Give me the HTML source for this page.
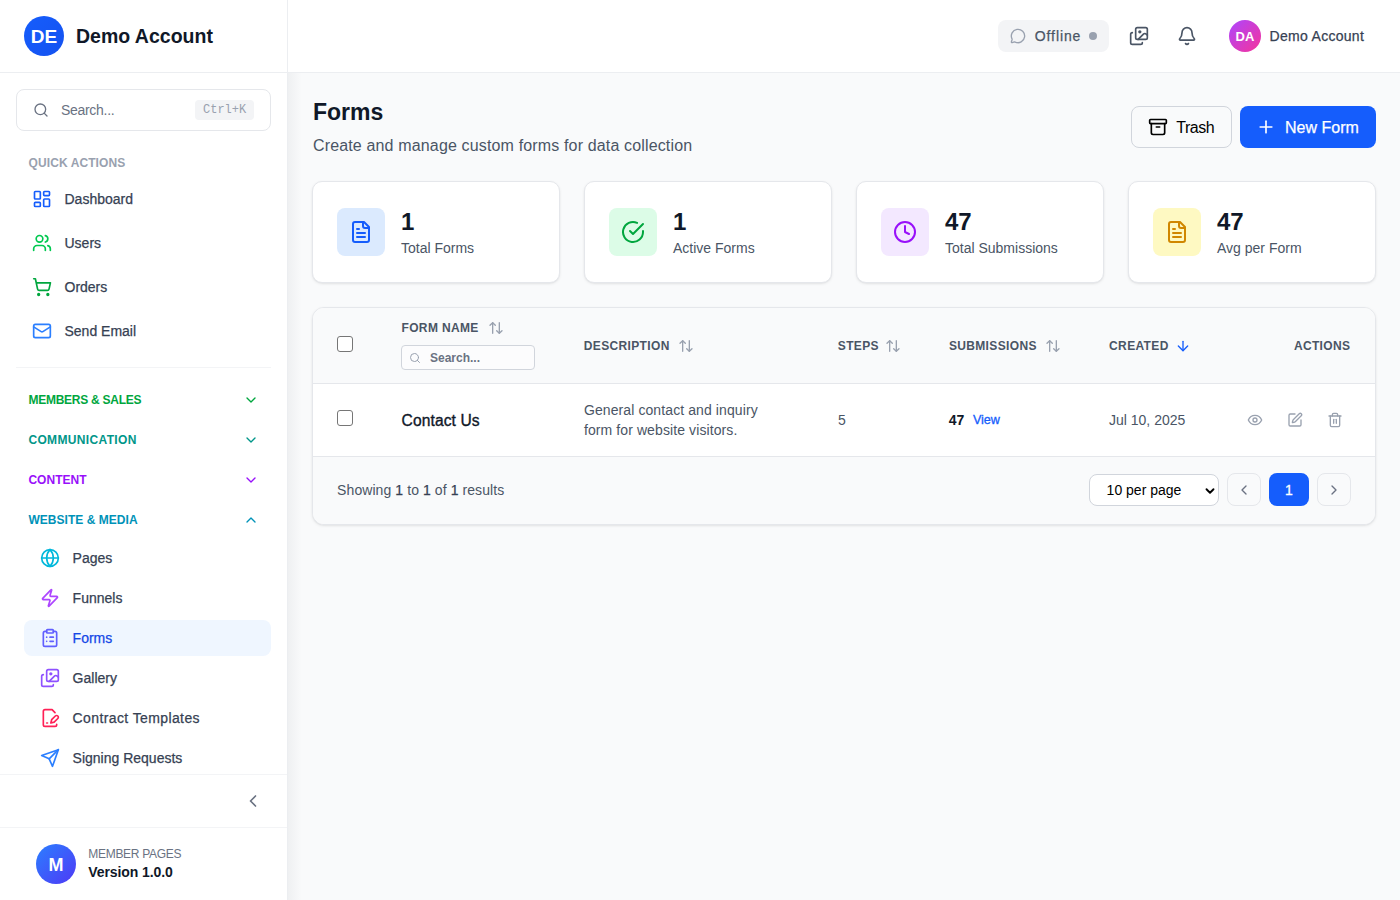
<!DOCTYPE html>
<html><head><meta charset="utf-8">
<style>
*{box-sizing:border-box;margin:0;padding:0}
html,body{width:1400px;height:900px;overflow:hidden;background:#f9fafb;font-family:"Liberation Sans",sans-serif;color:#101828;position:relative}
svg{position:absolute;display:block;fill:none;stroke:currentColor;stroke-width:2;stroke-linecap:round;stroke-linejoin:round}
.a{position:absolute}
.t{position:absolute;white-space:nowrap;line-height:1}
#sidebar{position:absolute;left:0;top:0;width:288px;height:900px;background:#fff;border-right:1px solid #eceef1}
#shadow{position:absolute;left:288px;top:73px;width:14px;height:827px;background:linear-gradient(to right,rgba(17,24,39,0.045),rgba(17,24,39,0))}
#header{position:absolute;left:288px;top:0;width:1112px;height:73px;background:#fff;border-bottom:1px solid #eceef1}
.nav{font-size:14px;color:#364153;-webkit-text-stroke:0.25px currentColor}
.med{-webkit-text-stroke:0.25px currentColor}
.sec{font-size:12px;font-weight:700;letter-spacing:0.1px}
.card{position:absolute;top:181px;width:248px;height:102px;background:#fff;border:1px solid #e5e7eb;border-radius:10px;box-shadow:0 1px 3px 0 rgba(0,0,0,0.08),0 1px 2px -1px rgba(0,0,0,0.08)}
.ib{position:absolute;left:24px;top:26px;width:48px;height:48px;border-radius:8px}
.num{position:absolute;left:88px;top:28px;font-size:24px;font-weight:700;line-height:1;color:#101828}
.lab{position:absolute;left:88px;top:59px;font-size:14px;line-height:1;color:#4a5565;white-space:nowrap}
.th{font-size:12px;font-weight:700;color:#4a5565;letter-spacing:0.35px}
.cb{position:absolute;width:16px;height:16px;border:1px solid #767676;border-radius:3px;background:#fff}
</style></head><body>
<div id="sidebar">
  <div class="a" style="left:0;top:0;width:287px;height:73px;border-bottom:1px solid #eceef1"></div>
  <div class="a" style="left:24px;top:16px;width:40px;height:40px;border-radius:50%;background:linear-gradient(135deg,#155dfc,#1552f0)"></div>
  <div class="t" style="left:24px;top:26.8px;width:40px;text-align:center;font-size:19px;font-weight:700;color:#fff">DE</div>
  <div class="t" style="left:76px;top:26.5px;font-size:19.5px;font-weight:700;color:#101828">Demo Account</div>

  <!-- search -->
  <div class="a" style="left:16px;top:89px;width:255px;height:42px;border:1px solid #e5e7eb;border-radius:8px"></div>
  <svg style="left:33px;top:102px;color:#6a7282" width="16" height="16" viewBox="0 0 24 24"><circle cx="11" cy="11" r="8"/><path d="m21 21-4.3-4.3"/></svg>
  <div class="t" style="left:61px;top:103px;font-size:14px;color:#6a7282;letter-spacing:-0.3px">Search...</div>
  <div class="a" style="left:195px;top:100px;width:59px;height:20px;border-radius:4px;background:#f3f4f6"></div>
  <div class="t" style="left:203px;top:104px;font-family:'Liberation Mono',monospace;font-size:12px;color:#99a1af">Ctrl+K</div>

  <div class="t sec" style="left:28.5px;top:156.7px;color:#99a1af">QUICK ACTIONS</div>

  <svg style="left:32px;top:189px;color:#155dfc" width="20" height="20" viewBox="0 0 24 24"><rect width="7" height="9" x="3" y="3" rx="1"/><rect width="7" height="5" x="14" y="3" rx="1"/><rect width="7" height="9" x="14" y="12" rx="1"/><rect width="7" height="5" x="3" y="16" rx="1"/></svg>
  <div class="t nav" style="left:64.5px;top:191.7px">Dashboard</div>
  <svg style="left:32px;top:233px;color:#00c950" width="20" height="20" viewBox="0 0 24 24"><path d="M16 21v-2a4 4 0 0 0-4-4H6a4 4 0 0 0-4 4v2"/><circle cx="9" cy="7" r="4"/><path d="M22 21v-2a4 4 0 0 0-3-3.87"/><path d="M16 3.13a4 4 0 0 1 0 7.75"/></svg>
  <div class="t nav" style="left:64.5px;top:236px">Users</div>
  <svg style="left:32px;top:277px;color:#00a63e" width="20" height="20" viewBox="0 0 24 24"><circle cx="8" cy="21" r="1"/><circle cx="19" cy="21" r="1"/><path d="M2.05 2.05h2l2.66 12.42a2 2 0 0 0 2 1.58h9.78a2 2 0 0 0 1.95-1.57l1.65-7.43H5.12"/></svg>
  <div class="t nav" style="left:64.5px;top:279.8px">Orders</div>
  <svg style="left:32px;top:321px;color:#2b7fff" width="20" height="20" viewBox="0 0 24 24"><rect width="20" height="16" x="2" y="4" rx="2"/><path d="m22 7-8.97 5.7a1.94 1.94 0 0 1-2.06 0L2 7"/></svg>
  <div class="t nav" style="left:64.5px;top:323.8px">Send Email</div>

  <div class="a" style="left:16px;top:367px;width:255px;height:1px;background:#f3f4f6"></div>

  <div class="t sec" style="left:28.4px;top:393.8px;color:#00a63e;letter-spacing:-0.25px">MEMBERS &amp; SALES</div>
  <svg style="left:243px;top:391.5px;color:#00a63e" width="16" height="16" viewBox="0 0 24 24"><path d="m6 9 6 6 6-6"/></svg>
  <div class="t sec" style="left:28.4px;top:433.8px;color:#009689;letter-spacing:0.35px">COMMUNICATION</div>
  <svg style="left:243px;top:431.5px;color:#009689" width="16" height="16" viewBox="0 0 24 24"><path d="m6 9 6 6 6-6"/></svg>
  <div class="t sec" style="left:28.4px;top:473.8px;color:#9810fa;letter-spacing:0.03px">CONTENT</div>
  <svg style="left:243px;top:471.5px;color:#9810fa" width="16" height="16" viewBox="0 0 24 24"><path d="m6 9 6 6 6-6"/></svg>
  <div class="t sec" style="left:28.4px;top:513.8px;color:#0092b8;letter-spacing:0.04px">WEBSITE &amp; MEDIA</div>
  <svg style="left:243px;top:511.5px;color:#0092b8" width="16" height="16" viewBox="0 0 24 24"><path d="m18 15-6-6-6 6"/></svg>

  <svg style="left:40px;top:548px;color:#00b8db" width="20" height="20" viewBox="0 0 24 24"><circle cx="12" cy="12" r="10"/><path d="M12 2a14.5 14.5 0 0 0 0 20 14.5 14.5 0 0 0 0-20"/><path d="M2 12h20"/></svg>
  <div class="t nav" style="left:72.6px;top:551px">Pages</div>
  <svg style="left:40px;top:588px;color:#ad46ff" width="20" height="20" viewBox="0 0 24 24"><path d="M4 14a1 1 0 0 1-.78-1.63l9.9-10.2a.5.5 0 0 1 .86.46l-1.92 6.02A1 1 0 0 0 13 10h7a1 1 0 0 1 .78 1.63l-9.9 10.2a.5.5 0 0 1-.86-.46l1.92-6.02A1 1 0 0 0 11 14z"/></svg>
  <div class="t nav" style="left:72.6px;top:591px">Funnels</div>
  <div class="a" style="left:24px;top:620px;width:247px;height:36px;border-radius:8px;background:#eff6ff"></div>
  <svg style="left:40px;top:628px;color:#615fff" width="20" height="20" viewBox="0 0 24 24"><rect width="8" height="4" x="8" y="2" rx="1" ry="1"/><path d="M16 4h2a2 2 0 0 1 2 2v14a2 2 0 0 1-2 2H6a2 2 0 0 1-2-2V6a2 2 0 0 1 2-2h2"/><path d="M12 11h4"/><path d="M12 16h4"/><path d="M8 11h.01"/><path d="M8 16h.01"/></svg>
  <div class="t nav" style="left:72.6px;top:631px;color:#1447e6">Forms</div>
  <svg style="left:40px;top:668px;color:#8e51ff" width="20" height="20" viewBox="0 0 24 24"><path d="m22 11-1.296-1.296a2.4 2.4 0 0 0-3.408 0L11 16"/><path d="M4 8a2 2 0 0 0-2 2v10a2 2 0 0 0 2 2h10a2 2 0 0 0 2-2"/><circle cx="13" cy="7" r="1" fill="currentColor"/><rect x="8" y="2" width="14" height="14" rx="2"/></svg>
  <div class="t nav" style="left:72.6px;top:671px">Gallery</div>
  <svg style="left:40px;top:708px;color:#ff2056" width="20" height="20" viewBox="0 0 24 24"><path d="M20 19.5v.5a2 2 0 0 1-2 2H6a2 2 0 0 1-2-2V4a2 2 0 0 1 2-2h8.5L18 5.5"/><path d="M8 18h1"/><path d="M18.42 9.61a2.1 2.1 0 1 1 2.97 2.97L16.95 17 13 18l.99-3.95 4.43-4.44Z"/></svg>
  <div class="t nav" style="left:72.6px;top:711px;letter-spacing:0.39px">Contract Templates</div>
  <svg style="left:40px;top:748px;color:#2b7fff" width="20" height="20" viewBox="0 0 24 24"><path d="m22 2-7 20-4-9-9-4Z"/><path d="M22 2 11 13"/></svg>
  <div class="t nav" style="left:72.6px;top:751px">Signing Requests</div>

  <div class="a" style="left:0;top:774px;width:287px;height:1px;background:#f3f4f6"></div>
  <svg style="left:243px;top:791px;color:#6a7282" width="20" height="20" viewBox="0 0 24 24"><path d="m15 18-6-6 6-6"/></svg>
  <div class="a" style="left:0;top:827px;width:287px;height:1px;background:#f3f4f6"></div>
  <div class="a" style="left:36px;top:844px;width:40px;height:40px;border-radius:50%;background:linear-gradient(135deg,#2b7fff,#4f39f6)"></div>
  <div class="t" style="left:36px;top:856px;width:40px;text-align:center;font-size:18px;font-weight:700;color:#fff">M</div>
  <div class="t" style="left:88.3px;top:847.6px;font-size:12px;color:#6a7282;letter-spacing:-0.3px">MEMBER PAGES</div>
  <div class="t" style="left:88.3px;top:865px;font-size:14px;font-weight:700;color:#101828;letter-spacing:-0.1px">Version 1.0.0</div>
</div>
<div id="shadow"></div>
<div id="header">
</div>
<!-- header contents (absolute to body) -->
<div class="a" style="left:998px;top:20px;width:111px;height:32px;border-radius:8px;background:#f3f4f6"></div>
<svg style="left:1010px;top:28px;color:#99a1af" width="16" height="16" viewBox="0 0 24 24"><path d="M2.992 16.342a2 2 0 0 1 .094 1.167l-1.065 3.29a1 1 0 0 0 1.236 1.168l3.413-.998a2 2 0 0 1 1.099.092 10 10 0 1 0-4.777-4.719"/></svg>
<div class="t med" style="left:1034.8px;top:28.7px;font-size:14px;color:#4a5565;letter-spacing:0.9px">Offline</div>
<div class="a" style="left:1089px;top:32px;width:8px;height:8px;border-radius:50%;background:#99a1af"></div>
<svg style="left:1129px;top:26px;color:#4a5565" width="20" height="20" viewBox="0 0 24 24"><path d="m22 11-1.296-1.296a2.4 2.4 0 0 0-3.408 0L11 16"/><path d="M4 8a2 2 0 0 0-2 2v10a2 2 0 0 0 2 2h10a2 2 0 0 0 2-2"/><circle cx="13" cy="7" r="1" fill="currentColor"/><rect x="8" y="2" width="14" height="14" rx="2"/></svg>
<svg style="left:1177px;top:26px;color:#4a5565" width="20" height="20" viewBox="0 0 24 24"><path d="M10.268 21a2 2 0 0 0 3.464 0"/><path d="M3.262 15.326A1 1 0 0 0 4 17h16a1 1 0 0 0 .74-1.673C19.41 13.956 18 12.499 18 8A6 6 0 0 0 6 8c0 4.499-1.411 5.956-2.738 7.326"/></svg>
<div class="a" style="left:1229px;top:20px;width:32px;height:32px;border-radius:50%;background:linear-gradient(135deg,#ad46ff,#f6339a)"></div>
<div class="t" style="left:1229px;top:30px;width:32px;text-align:center;font-size:13px;font-weight:700;color:#fff">DA</div>
<div class="t med" style="left:1269.6px;top:28.7px;font-size:14px;color:#364153;letter-spacing:0.29px">Demo Account</div>

<!-- page title -->
<div class="t" style="left:313px;top:101px;font-size:23px;font-weight:700;color:#101828">Forms</div>
<div class="t" style="left:313px;top:137.9px;font-size:16px;color:#4a5565;letter-spacing:0.15px">Create and manage custom forms for data collection</div>

<div class="a" style="left:1131px;top:106px;width:101px;height:42px;border:1px solid #d1d5dc;border-radius:8px"></div>
<svg style="left:1148px;top:117px;color:#000" width="20" height="20" viewBox="0 0 24 24"><rect width="20" height="5" x="2" y="3" rx="1"/><path d="M4 8v11a2 2 0 0 0 2 2h12a2 2 0 0 0 2-2V8"/><path d="M10 12h4"/></svg>
<div class="t" style="left:1176.3px;top:120px;font-size:16px;color:#000;letter-spacing:-0.5px">Trash</div>
<div class="a" style="left:1240px;top:106px;width:136px;height:42px;border-radius:8px;background:#155dfc"></div>
<svg style="left:1256px;top:117px;color:#fff" width="20" height="20" viewBox="0 0 24 24"><path d="M5 12h14"/><path d="M12 5v14"/></svg>
<div class="t med" style="left:1285px;top:119.5px;font-size:16px;color:#fff">New Form</div>

<!-- stat cards -->
<div class="card" style="left:312px">
  <div class="ib" style="background:#dbeafe"></div>
  <svg style="left:36px;top:38px;color:#155dfc" width="24" height="24" viewBox="0 0 24 24"><path d="M15 2H6a2 2 0 0 0-2 2v16a2 2 0 0 0 2 2h12a2 2 0 0 0 2-2V7Z"/><path d="M14 2v4a2 2 0 0 0 2 2h4"/><path d="M10 9H8"/><path d="M16 13H8"/><path d="M16 17H8"/></svg>
  <div class="num">1</div>
  <div class="lab">Total Forms</div>
</div>
<div class="card" style="left:584px">
  <div class="ib" style="background:#dcfce7"></div>
  <svg style="left:36px;top:38px;color:#00a63e" width="24" height="24" viewBox="0 0 24 24"><path d="M22 11.08V12a10 10 0 1 1-5.93-9.14"/><path d="m9 11 3 3L22 4"/></svg>
  <div class="num">1</div>
  <div class="lab">Active Forms</div>
</div>
<div class="card" style="left:856px">
  <div class="ib" style="background:#f3e8ff"></div>
  <svg style="left:36px;top:38px;color:#9810fa" width="24" height="24" viewBox="0 0 24 24"><circle cx="12" cy="12" r="10"/><polyline points="12 6 12 12 16 14"/></svg>
  <div class="num">47</div>
  <div class="lab">Total Submissions</div>
</div>
<div class="card" style="left:1128px">
  <div class="ib" style="background:#fef9c2"></div>
  <svg style="left:36px;top:38px;color:#d08700" width="24" height="24" viewBox="0 0 24 24"><path d="M15 2H6a2 2 0 0 0-2 2v16a2 2 0 0 0 2 2h12a2 2 0 0 0 2-2V7Z"/><path d="M14 2v4a2 2 0 0 0 2 2h4"/><path d="M10 9H8"/><path d="M16 13H8"/><path d="M16 17H8"/></svg>
  <div class="num">47</div>
  <div class="lab">Avg per Form</div>
</div>

<!-- table card -->
<div class="a" style="left:312px;top:307px;width:1064px;height:218px;background:#fff;border:1px solid #e5e7eb;border-radius:12px;box-shadow:0 1px 3px 0 rgba(0,0,0,0.08),0 1px 2px -1px rgba(0,0,0,0.08);overflow:hidden">
  <div class="a" style="left:0;top:0;width:1062px;height:76px;background:#f9fafb;border-bottom:1px solid #e5e7eb"></div>
  <div class="a" style="left:0;top:148px;width:1062px;height:68px;background:#f9fafb;border-top:1px solid #e5e7eb"></div>
</div>
<div class="cb" style="left:337px;top:336px"></div>
<div class="t th" style="left:401.5px;top:321.8px">FORM NAME</div>
<svg style="left:488px;top:320.4px;color:#99a1af" width="16" height="16" viewBox="0 0 24 24"><path d="m21 16-4 4-4-4"/><path d="M17 20V4"/><path d="m3 8 4-4 4 4"/><path d="M7 4v16"/></svg>
<div class="a" style="left:401px;top:345px;width:134px;height:25px;border:1px solid #d1d5dc;border-radius:4px;background:#fcfcfd"></div>
<svg style="left:409px;top:351.5px;color:#99a1af" width="12" height="12" viewBox="0 0 24 24"><circle cx="11" cy="11" r="8"/><path d="m21 21-4.3-4.3"/></svg>
<div class="t" style="left:430px;top:351.5px;font-size:12px;font-weight:700;color:#6a7282">Search...</div>
<div class="t th" style="left:583.8px;top:339.8px">DESCRIPTION</div>
<svg style="left:678px;top:338px;color:#99a1af" width="16" height="16" viewBox="0 0 24 24"><path d="m21 16-4 4-4-4"/><path d="M17 20V4"/><path d="m3 8 4-4 4 4"/><path d="M7 4v16"/></svg>
<div class="t th" style="left:837.8px;top:339.8px">STEPS</div>
<svg style="left:885px;top:338px;color:#99a1af" width="16" height="16" viewBox="0 0 24 24"><path d="m21 16-4 4-4-4"/><path d="M17 20V4"/><path d="m3 8 4-4 4 4"/><path d="M7 4v16"/></svg>
<div class="t th" style="left:948.9px;top:339.8px">SUBMISSIONS</div>
<svg style="left:1044.5px;top:338px;color:#99a1af" width="16" height="16" viewBox="0 0 24 24"><path d="m21 16-4 4-4-4"/><path d="M17 20V4"/><path d="m3 8 4-4 4 4"/><path d="M7 4v16"/></svg>
<div class="t th" style="left:1109.1px;top:339.8px">CREATED</div>
<svg style="left:1174.8px;top:338px;color:#155dfc" width="16" height="16" viewBox="0 0 24 24"><path d="M12 5v14"/><path d="m19 12-7 7-7-7"/></svg>
<div class="t th" style="left:1293.9px;top:339.8px">ACTIONS</div>

<div class="cb" style="left:337px;top:410px"></div>
<div class="t" style="left:401.6px;top:413px;font-size:15.6px;color:#101828;-webkit-text-stroke:0.35px #101828;letter-spacing:0.1px">Contact Us</div>
<div class="a" style="left:583.9px;top:399.75px;font-size:14px;line-height:20px;color:#4a5565;white-space:nowrap;letter-spacing:0.1px">General contact and inquiry<br>form for website visitors.</div>
<div class="t" style="left:837.9px;top:413px;font-size:14px;color:#4a5565">5</div>
<div class="t" style="left:948.8px;top:413px;font-size:14px;font-weight:700;color:#101828">47</div>
<div class="t" style="left:972.9px;top:413.5px;font-size:12.6px;color:#155dfc;-webkit-text-stroke:0.3px #155dfc">View</div>
<div class="t" style="left:1109px;top:413px;font-size:14px;color:#4a5565">Jul 10, 2025</div>
<svg style="left:1247px;top:412px;color:#99a1af" width="16" height="16" viewBox="0 0 24 24"><path d="M2 12s3-7 10-7 10 7 10 7-3 7-10 7-10-7-10-7Z"/><circle cx="12" cy="12" r="3"/></svg>
<svg style="left:1287px;top:412px;color:#99a1af" width="16" height="16" viewBox="0 0 24 24"><path d="M12 3H5a2 2 0 0 0-2 2v14a2 2 0 0 0 2 2h14a2 2 0 0 0 2-2v-7"/><path d="M18.375 2.625a1 1 0 0 1 3 3l-9.013 9.014a2 2 0 0 1-.853.505l-2.873.84a.5.5 0 0 1-.62-.62l.84-2.873a2 2 0 0 1 .506-.852z"/></svg>
<svg style="left:1327px;top:412px;color:#99a1af" width="16" height="16" viewBox="0 0 24 24"><path d="M3 6h18"/><path d="M19 6v14c0 1-1 2-2 2H7c-1 0-2-1-2-2V6"/><path d="M8 6V4c0-1 1-2 2-2h4c1 0 2 1 2 2v2"/><line x1="10" x2="10" y1="11" y2="17"/><line x1="14" x2="14" y1="11" y2="17"/></svg>

<div class="t" style="left:337.1px;top:483.1px;font-size:14px;color:#4a5565;letter-spacing:0.08px">Showing <span class="med" style="color:#364153">1</span> to <span class="med" style="color:#364153">1</span> of <span class="med" style="color:#364153">1</span> results</div>
<div class="a" style="left:1089px;top:474px;width:130px;height:32px;border:1px solid #d1d5dc;border-radius:8px;background:#fff"></div>
<div class="t" style="left:1106.6px;top:483px;font-size:14px;color:#000">10 per page</div>
<svg style="left:1203px;top:484px;color:#000;stroke-width:3.2" width="14" height="14" viewBox="0 0 24 24"><path d="m6 9 6 6 6-6"/></svg>
<div class="a" style="left:1227px;top:473px;width:34px;height:33px;border:1px solid #e5e7eb;border-radius:8px"></div>
<svg style="left:1236px;top:481.5px;color:#6a7282" width="16" height="16" viewBox="0 0 24 24"><path d="m15 18-6-6 6-6"/></svg>
<div class="a" style="left:1269px;top:473px;width:40px;height:33px;border-radius:8px;background:#155dfc"></div>
<div class="t" style="left:1269px;top:483px;width:40px;text-align:center;font-size:14px;color:#fff;-webkit-text-stroke:0.3px #fff">1</div>
<div class="a" style="left:1317px;top:473px;width:34px;height:33px;border:1px solid #e5e7eb;border-radius:8px"></div>
<svg style="left:1326px;top:481.5px;color:#6a7282" width="16" height="16" viewBox="0 0 24 24"><path d="m9 18 6-6-6-6"/></svg>
</body></html>
